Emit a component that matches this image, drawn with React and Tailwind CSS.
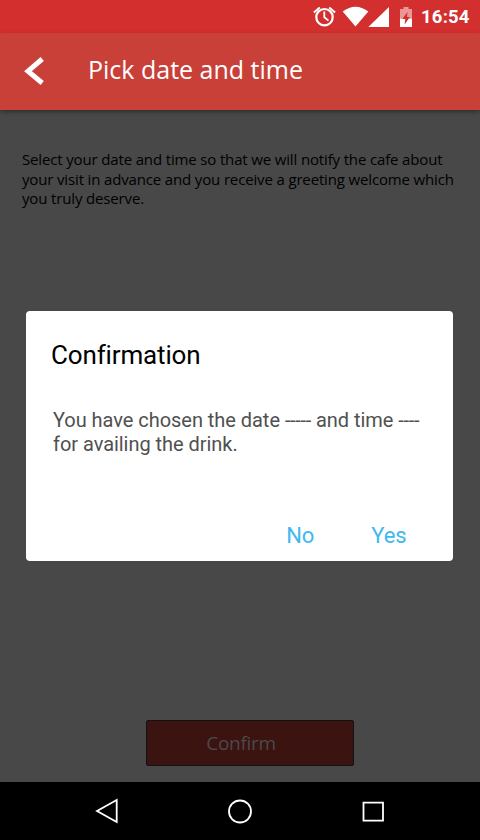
import React from "react";

function StatusBar() {
  return (
    <div className="flex h-[33px] shrink-0 items-center bg-[#d32f2f] text-white">
      <svg className="h-[33px] w-[120px] ml-[300px] shrink-0" viewBox="300 0 120 33" fill="none">
        <circle cx="324.5" cy="17.2" r="8.2" stroke="#fff" strokeWidth="2.2" />
        <path d="M324.3 11.5V17.3L328.5 20.6" stroke="#fff" strokeWidth="1.8" />
        <path d="M313.9 12.4L319.8 7.4M335.1 12.4L329.2 7.4" stroke="#fff" strokeWidth="2" />
        <path d="M342.7 11.6Q355.5 1.8 368.3 11.6L355.5 26.6Z" fill="#fff" />
        <path d="M389 7V27H368.3Z" fill="#fff" />
        <path d="M400 9H403.5V7H408.5V9H412V18.5H400Z" fill="#fff" fillOpacity=".5" />
        <path d="M400 18.5H412V27H400Z" fill="#fff" />
        <path d="M407.5 12L402.3 19H405.2L404.6 24.5L409.8 17H407Z" fill="#d32f2f" />
      </svg>
      <span className="ml-[1px] mt-[2px] font-['Roboto',sans-serif] text-[18.5px] font-bold leading-none tracking-[0.2px]">16:54</span>
    </div>
  );
}

function AppBar() {
  return (
    <header className="flex h-[77px] shrink-0 items-center bg-[#c94038] text-white shadow-[0_2px_4px_rgba(0,0,0,0.35)]">
      <svg className="ml-[22px] mb-[1px] h-[32px] w-[24px]" viewBox="22 55 24 32" fill="none">
        <path d="M42.2 59L28 71.2L42.2 83" stroke="#fff" strokeWidth="5" />
      </svg>
      <h1 className="ml-[42px] mb-[5px] whitespace-nowrap font-['Open_Sans',sans-serif] text-[25px] font-normal leading-[34px]">Pick date and time</h1>
    </header>
  );
}

function Dialog() {
  return (
    <section className="mx-[26px] mt-[102px] flex h-[250px] w-[427px] shrink-0 flex-col rounded-[4px] bg-white font-['Roboto',sans-serif]">
      <h2 className="ml-[25px] mt-[28px] text-[26px] leading-[32px] tracking-[-0.15px] text-black">Confirmation</h2>
      <p className="ml-[27px] mt-[37px] whitespace-nowrap text-[20px] leading-[24px] tracking-[-0.04px] text-[#505050]">
        You have chosen the date <span className="tracking-[-0.3px]">-----</span> and time <span className="tracking-[-0.3px]">----</span>
        <br />
        for availing the drink.
      </p>
      <div className="mr-[46.5px] mt-[66px] flex justify-end gap-[57px] text-[22px] leading-[28px] tracking-[-0.1px] text-[#3fb8f0]">
        <button>No</button>
        <button>Yes</button>
      </div>
    </section>
  );
}

function NavBar() {
  return (
    <nav className="h-[58px] shrink-0 bg-black">
      <svg className="h-[58px] w-[480px]" viewBox="0 782 480 58" fill="none" stroke="#fff" strokeWidth="1.8">
        <path d="M97 811L116.7 800V822Z" />
        <circle cx="240" cy="811.5" r="11" />
        <path d="M363.5 802.7H383V820.7H363.5Z" />
      </svg>
    </nav>
  );
}

export default function App() {
  return (
    <div className="flex h-[840px] w-[480px] flex-col overflow-hidden bg-[#484848]">
      <StatusBar />
      <AppBar />
      <main className="flex flex-1 flex-col">
        <p className="ml-[22px] mt-[40px] whitespace-nowrap font-['Open_Sans',sans-serif] text-[15px] leading-[19.5px] tracking-[-0.15px] text-black">
          Select your date and time so that we will notify the cafe about
          <br />
          your visit in advance and you receive a greeting welcome which
          <br />
          you truly deserve.
        </p>
        <Dialog />
        <button className="ml-[146px] mt-[159px] h-[46px] w-[208px] shrink-0 rounded-[2px] border border-[#121212] bg-[#3b1311] pr-[18px] pt-[2px] font-['Open_Sans',sans-serif] text-[19px] font-normal tracking-[-0.3px] text-[#4a4a4a]">Confirm</button>
      </main>
      <NavBar />
    </div>
  );
}
